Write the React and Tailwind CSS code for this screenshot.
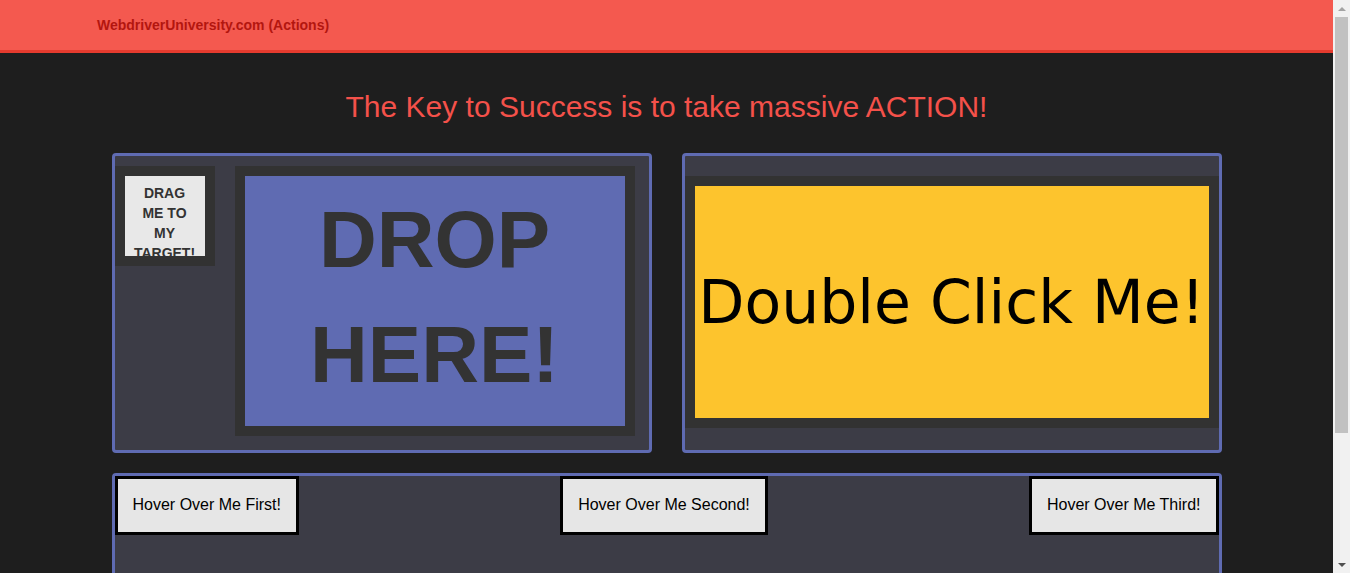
const HoverButton = ({ label }) => (
  <button className="h-[59px] border-[3px] border-black bg-[#e6e6e6] px-[15px] pb-[2px] text-[16px] text-black">
    {label}
  </button>
)

const Scrollbar = () => (
  <div className="flex w-[17px] shrink-0 flex-col bg-[#f1f1f1]">
    <div className="flex h-[17px] items-center justify-center">
      <div className="h-0 w-0 border-x-[4px] border-b-[4px] border-x-transparent border-b-[#a3a3a3]" />
    </div>
    <div className="mx-[2px] h-[416px] bg-[#c1c1c1]" />
    <div className="flex-1" />
    <div className="flex h-[17px] items-center justify-center">
      <div className="h-0 w-0 border-x-[4px] border-t-[4px] border-x-transparent border-t-[#505050]" />
    </div>
  </div>
)

const App = () => {
  return (
    <div className="flex h-[573px] w-[1350px] overflow-hidden bg-[#1e1e1e] font-['Liberation_Sans',Arial,sans-serif]">
      <div className="flex-1 overflow-hidden">
        {/* Navbar */}
        <div className="h-[53px] border-b-[3px] border-[#e53b2e] bg-[#f4594f]">
          <div className="flex h-[50px] items-center pl-[97px] text-[14px] font-bold text-[#b3160f]">
            WebdriverUniversity.com (Actions)
          </div>
        </div>

        <h1 className="mt-[36px] text-center text-[30px] leading-[36px] text-[#f4514a]">
          The Key to Success is to take massive ACTION!
        </h1>

        <div className="mx-auto mt-[28px] w-[1110px]">
          <div className="flex gap-[30px]">
            {/* Drag and drop */}
            <div className="flex h-[300px] w-[540px] gap-[20px] rounded-[4px] border-[3px] border-[#5f6bb2] bg-[#3c3c46] pt-[10px]">
              <div className="h-[100px] w-[100px] border-[10px] border-[#323232] bg-[#e8e8e8]">
                <div className="h-[80px] overflow-hidden pt-[7px] text-center text-[14px] font-bold leading-[20px] text-[#333]">
                  DRAG
                  <br />
                  ME TO
                  <br />
                  MY
                  <br />
                  TARGET!
                </div>
              </div>
              <div className="h-[270px] w-[400px] border-[10px] border-[#323232] bg-[#5f6bb2]">
                <div className="pt-[6px] text-center text-[80px] font-bold leading-[115px] text-[#333]">
                  DROP
                  <br />
                  HERE!
                </div>
              </div>
            </div>

            {/* Double click */}
            <div className="h-[300px] w-[540px] rounded-[4px] border-[3px] border-[#5f6bb2] bg-[#3c3c46] pt-[20px]">
              <div className="h-[252px] border-[10px] border-[#323232]">
                <div className="flex h-full items-center justify-center bg-[#fdc42d] font-['DejaVu_Sans',sans-serif] text-[60px] text-black">
                  Double Click Me!
                </div>
              </div>
            </div>
          </div>

          {/* Hover */}
          <div className="mt-[20px] h-[200px] rounded-[4px] border-[3px] border-[#5f6bb2] bg-[#3c3c46]">
            <div className="flex justify-between">
              <HoverButton label="Hover Over Me First!" />
              <HoverButton label="Hover Over Me Second!" />
              <HoverButton label="Hover Over Me Third!" />
            </div>
          </div>
        </div>
      </div>
      <Scrollbar />
    </div>
  )
}

export default App
